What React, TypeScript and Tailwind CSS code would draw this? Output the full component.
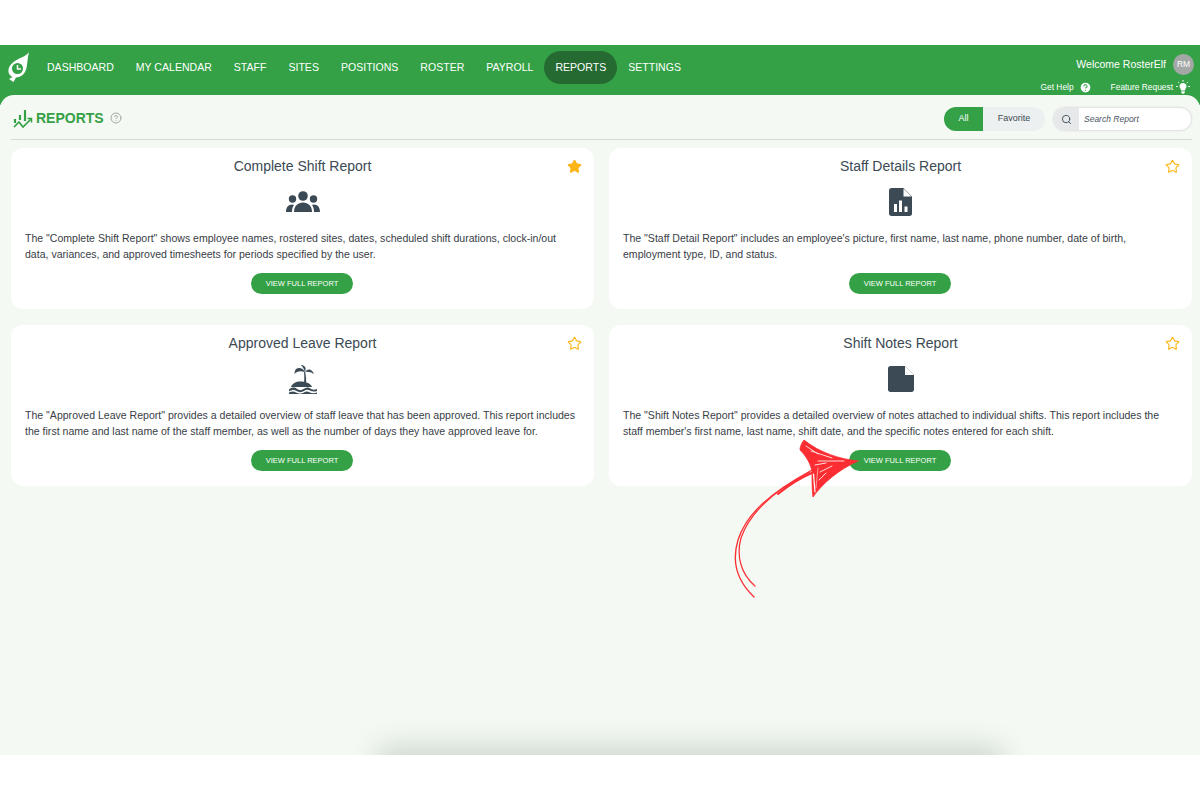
import { Search, Star, HelpCircle } from 'lucide-react'

const navItems = ["DASHBOARD", "MY CALENDAR", "STAFF", "SITES", "POSITIONS", "ROSTER", "PAYROLL", "REPORTS", "SETTINGS"]

function ElfLogo() {
  return (
    <svg width="22" height="30" viewBox="0 0 22 30" className="block">
      <path d="M21 0 C19 3.500 14 5 9.500 7.500 C3 11 0 15 0.500 20 C1 22.500 2.500 24 4.500 25 L1 27 L5.500 30 L8 25.500 C13 25.500 17 22 18.500 16 C19.500 11 19.500 6 21 0 Z" fill="#fff" />
      <circle cx="9.500" cy="16.500" r="5.500" fill="#34a146" />
      <path d="M9.500 13 V17 H13" fill="none" stroke="#fff" strokeWidth="1.500" />
    </svg>
  )
}

function ReportsIcon() {
  return (
    <svg width="20" height="19" viewBox="0 0 20 19" fill="none" stroke="#34a146" className="block">
      <path d="M2 10 V14 M7 6 V11 M12 1 V12" strokeWidth="2.200" />
      <path d="M1 18 L6 13 L10 18 L18 10" strokeWidth="1.700" />
      <path d="M14.500 9.500 H18.500 V13.500" strokeWidth="1.500" />
    </svg>
  )
}

function PeopleIcon() {
  return (
    <svg width="34" height="22" viewBox="0 0 34 22" fill="#3b4a54" className="block">
      <circle cx="17" cy="5" r="4.800" />
      <circle cx="6.500" cy="8" r="3.700" />
      <circle cx="27.500" cy="8" r="3.700" />
      <path d="M8 21 C8 15 12 11.500 17 11.500 C22 11.500 26 15 26 21 Z" />
      <path d="M0 21 C0 16.500 2 13.500 6.500 13.500 L8 14 C6.500 16 6 18.500 6 21 Z" />
      <path d="M34 21 C34 16.500 32 13.500 27.500 13.500 L26 14 C27.500 16 28 18.500 28 21 Z" />
    </svg>
  )
}

function PalmIcon() {
  return (
    <svg width="28" height="30" viewBox="0 0 28 30" fill="#3b4a54" className="block">
      <path d="M15 8 C15.500 13 15.500 17 14.500 21 L17 21 C17.500 17 17 12 16.200 8 Z" />
      <path d="M16 8 C14 4 10 3 7 5 C6 6 5.500 8 5.500 10 C8 7 11 6.500 16 8 Z" />
      <path d="M16 8 C18 3 15 1 12 1 C14 3 15 5 16 8 Z" />
      <path d="M16 8 C19 4 23 5 25 10 C22 8 19 7.500 16 8 Z" />
      <path d="M2 23 C3 19 8 17 13 17.500 C18 18 22 20 23 23 Z" />
      <path d="M0 25.500 C3 23 6 23 8 25 C10.500 26.500 12.500 26.500 14.500 25 C17 23 20 23 22 25 C24 26 26 26 28 25 L28 27 C25 28 23 27.500 21 26.500 C19 25.500 17 25.500 15 27 C12.500 28.500 10 28.500 7.500 27 C5.500 25.500 3 25.500 0 27.500 Z" />
      <path d="M0 28.500 C3 27 5 27 7 28.500 C10 30 12.500 30 15 28.500 C17 27 19 27.500 21 28.500 C23 29.500 25.500 29.500 28 28.500 L28 30 L0 30 Z" />
    </svg>
  )
}

function NoteIcon() {
  return (
    <svg width="26" height="26" viewBox="0 0 26 26" className="block">
      <path d="M2.500 0 H17 L26 9 V23.500 C26 25 25 26 23.500 26 H2.500 C1 26 0 25 0 23.500 V2.500 C0 1 1 0 2.500 0 Z" fill="#3b4a54" />
      <path d="M17 0 V9 H26 Z" fill="#fff" />
    </svg>
  )
}

function DocChartIcon() {
  return (
    <svg width="23" height="28" viewBox="0 0 23 28" className="block">
      <path d="M2.500 0 H14.500 L23 8.500 V25.500 C23 27 22 28 20.500 28 H2.500 C1 28 0 27 0 25.500 V2.500 C0 1 1 0 2.500 0 Z" fill="#3b4a54" />
      <path d="M14.500 0.500 V8.500 H22.500 Z" fill="#fff" />
      <path d="M5 16 H8 V24 H5 Z M10 12.500 H13 V24 H10 Z M15.500 18.500 H18.500 V24 H15.500 Z" fill="#fff" />
    </svg>
  )
}

function BulbIcon() {
  return (
    <svg width="14" height="14" viewBox="0 0 14 14" fill="#fff" className="block">
      <path d="M7 3 C4.800 3 3.500 4.500 3.500 6.300 C3.500 8 5 8.800 5 10.500 H9 C9 8.800 10.500 8 10.500 6.300 C10.500 4.500 9.200 3 7 3 Z" />
      <path d="M5.300 11.200 H8.700 V12.800 L7.800 13.800 H6.200 L5.300 12.800 Z" />
      <path d="M7 0 V1.800 M2.200 2 L3.300 3.100 M11.800 2 L10.700 3.100 M0 6.500 H1.800 M12.200 6.500 H14" stroke="#fff" strokeWidth="1" />
    </svg>
  )
}

function RedArrow() {
  return (
    <svg width="150" height="180" viewBox="720 430 150 180" fill="none" stroke="#fb2d33" strokeLinecap="round" strokeLinejoin="round" className="absolute left-[720px] top-[430px] pointer-events-none">
      <path d="M754 597 C736 580 732 560 738 540 C746 515 768 494 812 470" strokeWidth="1.300" />
      <path d="M755 586 C741 574 736 556 741 538 C750 512 775 490 810 472" strokeWidth="1.200" />
      <path d="M778 494 C790 484 800 478 814 472" strokeWidth="2" />
      <path d="M858 461 C840 459 820 453 804 440 C801 444 800 447 800 450 C806 456 811 464 812 472 C812 480 812 490 813 497 C822 484 838 470 858 461 Z" fill="#fb2d33" strokeWidth="0.800" />
      <path d="M806 446 L818 454 M811 451 L832 458 M818 461 L844 461 M815 465 L826 463 M820 472 L832 466 M819 480 L826 473" stroke="#ffd9d9" strokeWidth="1" />
      <path d="M813.500 474 L815 492" stroke="#fff" strokeWidth="1.200" />
      <path d="M818 468 L816 488" stroke="#ffc4c4" strokeWidth="0.700" />
    </svg>
  )
}

function ReportCard({ title, text, icon, starred }: { title: string; text: string[]; icon: React.ReactNode; starred?: boolean }) {
  return (
    <div className="relative h-[161px] rounded-[12px] bg-white px-[14px] pt-[9px]">
      <h3 className="text-center text-[14px] leading-[18px] text-[#3b4a54]">{title}</h3>
      <Star
        size={15}
        strokeWidth={1.800}
        className={`absolute right-[12px] top-[11px] text-[#fbb516] ${starred ? "fill-[#fbb516]" : ""}`}
      />
      <div className="mt-[12px] flex h-[30px] items-center justify-center">{icon}</div>
      <p className="mt-[13px] text-[10.55px] leading-[16px] text-[#384046]">
        {text.map((line) => (
          <span key={line} className="block whitespace-nowrap">{line}</span>
        ))}
      </p>
      <div className="absolute inset-x-0 bottom-[15px] flex justify-center pr-[1px]">
        <button className="h-[21px] w-[102px] rounded-full bg-[#34a146] text-[7.5px] text-white">VIEW FULL REPORT</button>
      </div>
    </div>
  )
}

export default function App() {
  return (
    <div className="relative h-[800px] w-[1200px] overflow-hidden bg-white font-['Liberation_Sans',Arial,sans-serif]">
      <div className="h-[45px]" />
      <header className="flex h-[60px] items-start bg-[#34a146] text-white">
        <div className="ml-[8px] mt-[7px] w-[28px]">
          <ElfLogo />
        </div>
        <nav className="mt-[6px] flex items-center">
          {navItems.map((item) => (
            <a
              key={item}
              className={`flex h-[33px] items-center rounded-full px-[11px] text-[10.55px] ${item === "REPORTS" ? "bg-[#246a31]" : ""}`}
            >
              {item}
            </a>
          ))}
        </nav>
        <div className="ml-auto mr-[6px] mt-[9px] flex flex-col items-end">
          <div className="flex items-center gap-[7px]">
            <span className="text-[10.5px]">Welcome RosterElf</span>
            <span className="flex h-[21px] w-[21px] items-center justify-center rounded-full bg-[#a3a8a6] text-[8.5px]">RM</span>
          </div>
          <div className="mr-[4px] mt-[5px] flex items-center text-[8.4px]">
            <span>Get Help</span>
            <HelpCircle size={13} className="ml-[5px] fill-white text-[#34a146]" />
            <span className="ml-[19px]">Feature Request</span>
            <span className="ml-[3px]"><BulbIcon /></span>
          </div>
        </div>
      </header>
      <main className="relative -mt-[10px] h-[660px] overflow-hidden rounded-t-[14px] bg-[#f4f9f3] pl-[11px] pr-[8px]">
        <div className="flex h-[45px] items-center justify-between border-b border-[#d5dbd5] pt-[4px]">
          <div className="-mt-[2px] flex items-center">
            <span className="ml-[2px]"><ReportsIcon /></span>
            <h1 className="ml-[3px] text-[14px] font-bold text-[#34a146]">REPORTS</h1>
            <HelpCircle size={12} className="ml-[6px] text-[#a3a8a6]" />
          </div>
          <div className="flex items-center">
            <div className="flex h-[24px] items-center overflow-hidden rounded-full bg-[#edf0f0] text-[9px]">
              <span className="flex h-full w-[39px] items-center justify-center bg-[#34a146] text-white">All</span>
              <span className="flex w-[62px] items-center justify-center text-[#3b4a54]">Favorite</span>
            </div>
            <div className="ml-[8px] flex h-[24px] w-[139px] items-center overflow-hidden rounded-full border border-[#e3e5e5] bg-white shadow-[0_0_2px_rgba(0,0,0,0.1)]">
              <span className="flex h-full w-[25px] items-center justify-center bg-[#e6e8e9]">
                <Search size={11} className="text-[#3b4a54]" />
              </span>
              <span className="ml-[5px] text-[8.5px] italic text-[#4b5563]">Search Report</span>
            </div>
          </div>
        </div>
        <div className="mt-[8px] grid grid-cols-2 gap-x-[15px] gap-y-[16px]">
          <ReportCard
            title="Complete Shift Report"
            starred
            icon={<PeopleIcon />}
            text={[
              'The "Complete Shift Report" shows employee names, rostered sites, dates, scheduled shift durations, clock-in/out',
              "data, variances, and approved timesheets for periods specified by the user.",
            ]}
          />
          <ReportCard
            title="Staff Details Report"
            icon={<DocChartIcon />}
            text={[
              'The "Staff Detail Report" includes an employee\'s picture, first name, last name, phone number, date of birth,',
              "employment type, ID, and status.",
            ]}
          />
          <ReportCard
            title="Approved Leave Report"
            icon={<PalmIcon />}
            text={[
              'The "Approved Leave Report" provides a detailed overview of staff leave that has been approved. This report includes',
              "the first name and last name of the staff member, as well as the number of days they have approved leave for.",
            ]}
          />
          <ReportCard
            title="Shift Notes Report"
            icon={<NoteIcon />}
            text={[
              'The "Shift Notes Report" provides a detailed overview of notes attached to individual shifts. This report includes the',
              "staff member's first name, last name, shift date, and the specific notes entered for each shift.",
            ]}
          />
        </div>
        <div className="absolute bottom-[-14px] left-[385px] h-[14px] w-[610px] rounded-full shadow-[0_0_26px_10px_rgba(80,110,95,0.22)]" />
      </main>
      <RedArrow />
    </div>
  )
}
